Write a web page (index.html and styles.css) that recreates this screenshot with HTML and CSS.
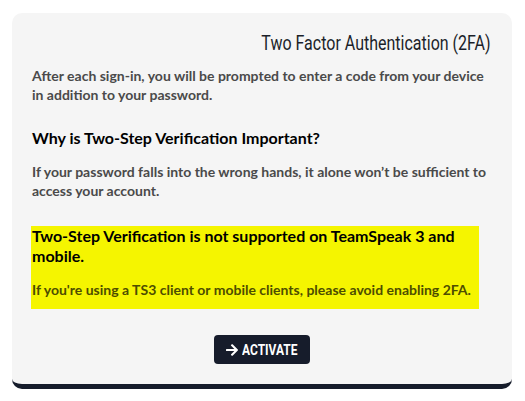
FILE: index.html
```html
<!DOCTYPE html>
<html>
<head>
<meta charset="utf-8">
<link rel="stylesheet" href="styles.css">
</head>
<body>
<div class="card">
  <h2 class="title"><span class="title-text">Two Factor Authentication (2FA)</span></h2>
  <p class="text">After each sign-in, you will be prompted to enter a code from your device in addition to your password.</p>
  <h3 class="heading">Why is Two-Step Verification Important?</h3>
  <p class="text">If your password falls into the wrong hands, it alone won’t be sufficient to access your account.</p>
  <div class="warning">
    <h3 class="heading warn-heading">Two-Step Verification is not supported on TeamSpeak 3 and mobile.</h3>
    <p class="text warn-text">If you're using a TS3 client or mobile clients, please avoid enabling 2FA.</p>
  </div>
  <div class="actions">
    <button class="btn"><svg class="arrow" viewBox="0 0 448 512" width="12" height="14"><path fill="currentColor" d="M190.5 66.9l22.2-22.2c9.4-9.4 24.6-9.4 33.9 0L441 239c9.4 9.4 9.4 24.6 0 33.9L246.6 467.3c-9.4 9.4-24.6 9.4-33.9 0l-22.2-22.2c-9.5-9.5-9.3-25 .4-34.3L311.4 296H24c-13.3 0-24-10.7-24-24v-32c0-13.3 10.7-24 24-24h287.4L190.9 101.2c-9.8-9.3-10-24.8-.4-34.3z"/></svg><span class="btn-text">ACTIVATE</span></button>
  </div>
</div>
</body>
</html>
```
FILE: styles.css
```css
body {
  margin: 0;
  padding: 13px 13px 0 12px;
  background: #fff;
}
.card {
  width: 500px;
  box-sizing: border-box;
  background: #f5f5f5;
  border-radius: 10px;
  border-bottom: 5px solid #161c2b;
  padding: 18px 21px 20px 20px;
}
.title {
  margin: 0 0 11px;
  text-align: right;
  font-family: Roboto, sans-serif;
  font-weight: 400;
  font-size: 20px;
  line-height: 24px;
  color: #1b1f2a;
}
.title-text {
  display: inline-block;
  transform: scaleX(0.8);
  transform-origin: right center;
}
.text {
  margin: 0;
  font-family: Lato, sans-serif;
  font-weight: 700;
  font-size: 14px;
  line-height: 19px;
  color: #4a4a4a;
}
.heading {
  margin: 24px 0 14px;
  font-family: Lato, sans-serif;
  font-weight: 700;
  font-size: 16px;
  line-height: 20px;
  color: #000;
}
.warning {
  margin-top: 26px;
  background: #f5f500;
  width: 448px;
  margin-left: -1px;
  padding: 0 0 10px 1px;
  box-sizing: border-box;
}
.warn-heading {
  margin: 0 0 14px;
}
.warn-text {
  color: #4d4d00;
}
.actions {
  display: flex;
  justify-content: center;
  margin-top: 26px;
}
.btn {
  display: flex;
  align-items: center;
  gap: 4px;
  background: #161c2b;
  color: #fff;
  border: none;
  border-radius: 4px;
  height: 29px;
  padding: 0 13px 0 12px;
  font-family: Roboto, sans-serif;
  font-weight: 700;
  font-size: 15px;
}
.btn-text {
  display: inline-block;
  width: 55px;
  white-space: nowrap;
  transform: scaleX(0.8);
  transform-origin: left center;
}
```
